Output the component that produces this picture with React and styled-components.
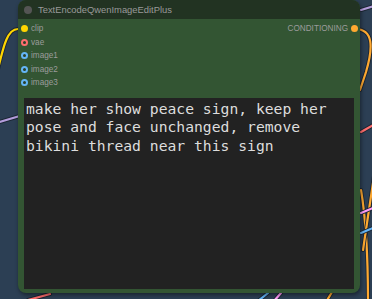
import React from 'react';
import styled, { createGlobalStyle } from 'styled-components';

const GlobalStyle = createGlobalStyle`
  html, body {
    margin: 0;
    padding: 0;
    background: #2c3f54;
    overflow: hidden;
  }
`;

const Canvas = styled.div`
  position: relative;
  width: 372px;
  height: 299px;
  background: #2c3f54;
  overflow: hidden;
  font-family: "Liberation Sans", Arial, sans-serif;
`;

const Wires = styled.svg`
  position: absolute;
  left: 0;
  top: 0;
  width: 372px;
  height: 299px;
`;

const Node = styled.div`
  position: absolute;
  left: ${p => p.x}px;
  top: ${p => p.y}px;
  width: ${p => p.w}px;
  height: ${p => p.h}px;
  display: flex;
  flex-direction: column;
  background: #335533;
  border-radius: 8px;
  box-shadow: 1px 2px 4px rgba(0, 0, 0, 0.45);
  overflow: hidden;
`;

const TitleBar = styled.div`
  height: 19px;
  flex: none;
  display: flex;
  align-items: center;
  gap: 6px;
  padding-left: 6px;
  background: #223322;
  color: #999;
  font-size: 9.4px;
`;

const TitleDot = styled.span`
  width: 8px;
  height: 8px;
  border-radius: 50%;
  background: #555;
`;

const Slots = styled.div`
  display: flex;
  justify-content: space-between;
  padding: 3px 0 0;
`;

const SlotColumn = styled.div`
  display: flex;
  flex-direction: column;
  align-items: ${p => (p.out ? 'flex-end' : 'flex-start')};
`;

const Slot = styled.div`
  height: 13.5px;
  display: flex;
  align-items: center;
  gap: 3px;
  flex-direction: ${p => (p.out ? 'row-reverse' : 'row')};
  padding: ${p => (p.out ? '0 2px 0 0' : '0 0 0 3px')};
  color: #9c9c9c;
  font-size: 8.2px;
`;

const Dot = styled.span`
  width: 7px;
  height: 7px;
  box-sizing: border-box;
  border-radius: 50%;
  background: ${p => (p.hollow ? '#2a402a' : p.color)};
  border: 2px solid ${p => p.color};
`;

const Prompt = styled.div`
  flex: 1;
  margin: 8.5px 6px 4px;
  padding: 1.5px 2px;
  background: #222;
  color: #ddd;
  font-family: "DejaVu Sans Mono", "Liberation Mono", monospace;
  font-size: 14.7px;
  line-height: 18.7px;
  white-space: pre-wrap;
  word-break: break-word;
`;

const inputs = [
  { name: 'clip', color: '#ffd500' },
  { name: 'vae', color: '#ff6e6e', hollow: true },
  { name: 'image1', color: '#64b5f6', hollow: true },
  { name: 'image2', color: '#64b5f6', hollow: true },
  { name: 'image3', color: '#64b5f6', hollow: true },
];

const wires = [
  { d: 'M18 29 C8 29 4 42 -4 78', c: '#ffd500' },
  { d: 'M355 29 C374 29 373 48 366 72 L360 90', c: '#ffa931' },
  { d: 'M361 190 C366 220 368 250 368 302', c: '#ffa931' },
  { d: 'M374 176 L363 250', c: '#ffa931' },
  { d: 'M326 302 L332 292', c: '#ffa931' },
  { d: 'M361 10 L374 6', c: '#b39ddb' },
  { d: 'M-2 122.5 L18 116.5', c: '#b39ddb' },
  { d: 'M361 132 L374 124.5', c: '#ff6e6e' },
  { d: 'M361 213 L374 207.5', c: '#ff9cf9' },
  { d: 'M361 233 L374 227.5', c: '#64b5f6' },
  { d: 'M28 300 L50 294', c: '#ff6e6e' },
  { d: 'M258 301 L268 293', c: '#64b5f6' },
  { d: 'M274 301 L281 293', c: '#ff9cf9' },
];

export default function App() {
  return (
    <Canvas>
      <GlobalStyle />
      <Wires viewBox="0 0 372 299">
        {wires.map((w, i) => (
          <g key={i} fill="none" strokeLinecap="round">
            <path d={w.d} stroke="#1b2633" strokeWidth="4" />
            <path d={w.d} stroke={w.c} strokeWidth="2.2" />
          </g>
        ))}
      </Wires>
      <Node x={18} y={0} w={342} h={293}>
        <TitleBar>
          <TitleDot />
          TextEncodeQwenImageEditPlus
        </TitleBar>
        <Slots>
          <SlotColumn>
            {inputs.map(s => (
              <Slot key={s.name}>
                <Dot color={s.color} hollow={s.hollow} />
                {s.name}
              </Slot>
            ))}
          </SlotColumn>
          <SlotColumn out>
            <Slot out>
              <Dot color="#ffa931" />
              CONDITIONING
            </Slot>
          </SlotColumn>
        </Slots>
        <Prompt>
          make her show peace sign, keep her pose and face unchanged, remove bikini thread near this sign
        </Prompt>
      </Node>
    </Canvas>
  );
}
